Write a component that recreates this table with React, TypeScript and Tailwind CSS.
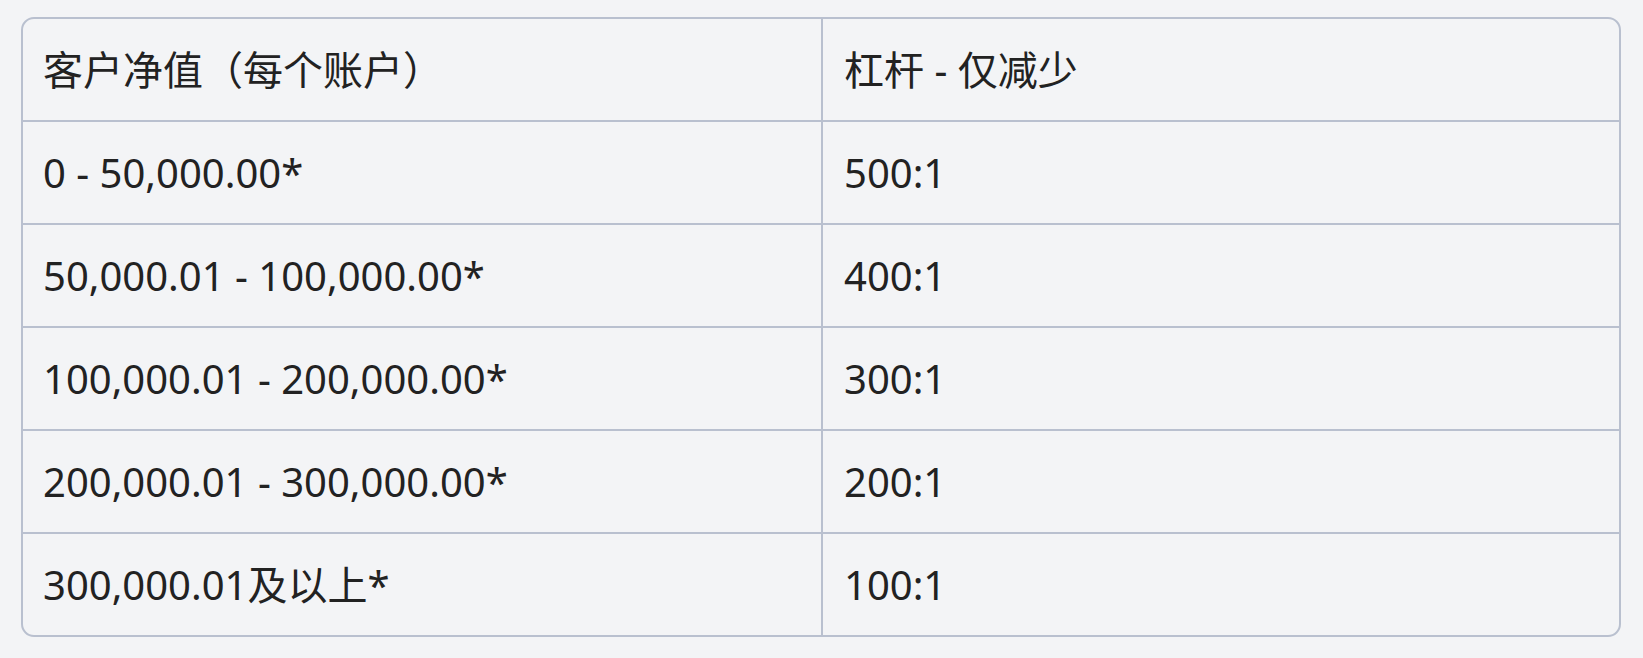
const ROWS: [string, string][] = [
  ["0 - 50,000.00*", "500:1"],
  ["50,000.01 - 100,000.00*", "400:1"],
  ["100,000.01 - 200,000.00*", "300:1"],
  ["200,000.01 - 300,000.00*", "200:1"],
  ["300,000.01及以上*", "100:1"],
];

function Row({ left, right, first }: { left: string; right: string; first?: boolean }) {
  return (
    <div className={`grid grid-cols-2 ${first ? "h-[101px]" : "h-[103px] border-t-2 border-[#b9c0cf]"}`}>
      <div className="flex items-center pl-[20px] pr-4">{left}</div>
      <div className="flex items-center pl-[21px] pr-4 border-l-2 border-[#b9c0cf]">{right}</div>
    </div>
  );
}

export default function App() {
  return (
    <div
      className="min-h-screen bg-[#f3f4f6] pl-[21px] pr-[22px] pt-[17px] pb-[21px] text-[#222222]"
      style={{ fontFamily: '"Noto Sans", "Noto Sans CJK SC", sans-serif' }}
    >
      <div className="rounded-[13px] border-2 border-[#b9c0cf] overflow-hidden text-[40px] leading-none">
        <Row left="客户净值（每个账户）" right="杠杆 - 仅减少" first />
        {ROWS.map(([l, r]) => (
          <Row key={l} left={l} right={r} />
        ))}
      </div>
    </div>
  );
}
